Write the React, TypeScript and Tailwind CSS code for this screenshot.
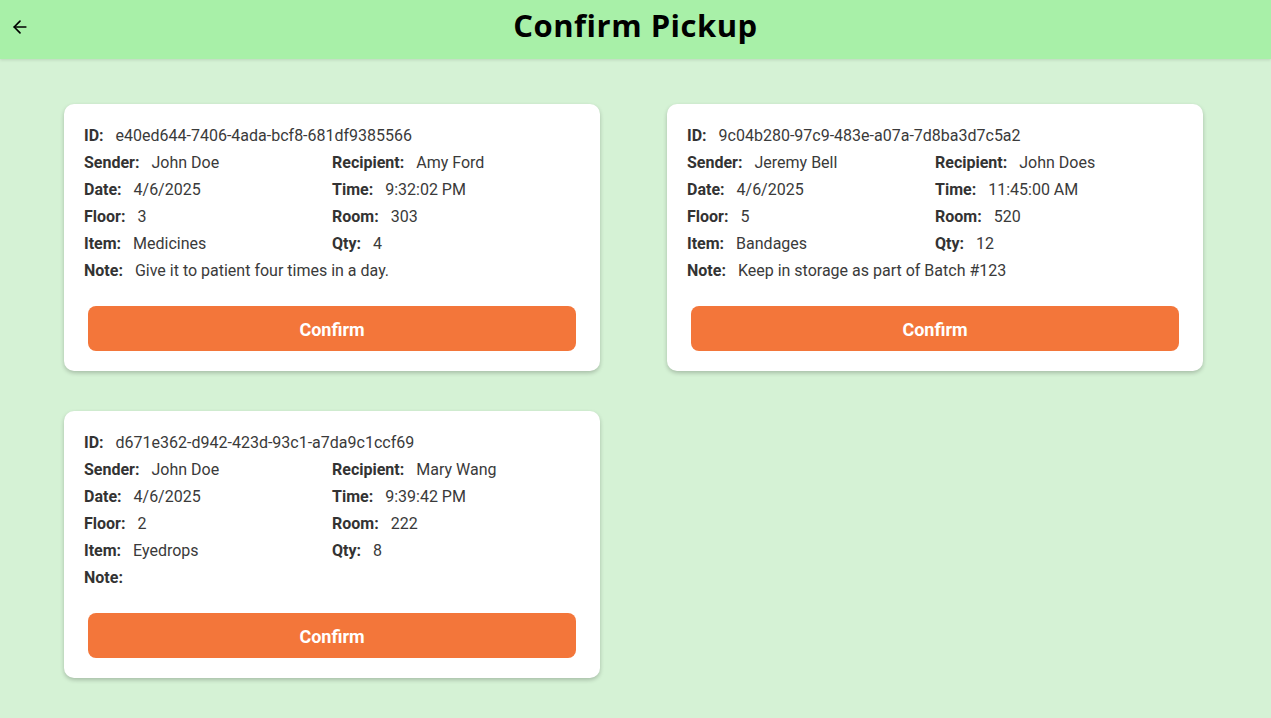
import React from 'react';
import { ArrowLeft } from 'lucide-react';

const pickups = [
  {
    id: 'e40ed644-7406-4ada-bcf8-681df9385566',
    sender: 'John Doe',
    recipient: 'Amy Ford',
    date: '4/6/2025',
    time: '9:32:02 PM',
    floor: '3',
    room: '303',
    item: 'Medicines',
    qty: '4',
    note: 'Give it to patient four times in a day.',
  },
  {
    id: '9c04b280-97c9-483e-a07a-7d8ba3d7c5a2',
    sender: 'Jeremy Bell',
    recipient: 'John Does',
    date: '4/6/2025',
    time: '11:45:00 AM',
    floor: '5',
    room: '520',
    item: 'Bandages',
    qty: '12',
    note: 'Keep in storage as part of Batch #123',
  },
  {
    id: 'd671e362-d942-423d-93c1-a7da9c1ccf69',
    sender: 'John Doe',
    recipient: 'Mary Wang',
    date: '4/6/2025',
    time: '9:39:42 PM',
    floor: '2',
    room: '222',
    item: 'Eyedrops',
    qty: '8',
    note: '',
  },
];

const Field = ({ label, value }: any) => (
  <div className="flex items-center h-[27px] whitespace-nowrap">
    <span className="font-bold text-[#333333]">{label}:</span>
    <span className="ml-[12px] text-[#3a3a3a]">{value}</span>
  </div>
);

const PickupCard = ({ p }: any) => (
  <div className="bg-white rounded-[10px] shadow-[0_2px_4px_rgba(0,0,0,0.22)] pt-[18px] pb-5 px-5">
    <Field label="ID" value={p.id} />
    <div className="grid grid-cols-2">
      <Field label="Sender" value={p.sender} />
      <Field label="Recipient" value={p.recipient} />
      <Field label="Date" value={p.date} />
      <Field label="Time" value={p.time} />
      <Field label="Floor" value={p.floor} />
      <Field label="Room" value={p.room} />
      <Field label="Item" value={p.item} />
      <Field label="Qty" value={p.qty} />
    </div>
    <Field label="Note" value={p.note} />
    <div className="px-1 mt-[22px]">
      <button className="w-full h-[45px] rounded-lg bg-[#f3763a] text-white font-bold text-[18px] pt-px">
        Confirm
      </button>
    </div>
  </div>
);

export default function App() {
  return (
    <div className="min-h-[718px] bg-[#d5f2d5] text-[16px]" style={{ fontFamily: 'Roboto, "Liberation Sans", sans-serif' }}>
      <header className="relative h-[59px] bg-[#a8f0a8] flex items-center justify-center shadow-[0_1px_3px_rgba(0,0,0,0.12)]">
        <button className="absolute left-[10px] top-[17px] text-black">
          <ArrowLeft className="w-5 h-5" strokeWidth={2} />
        </button>
        <h1 className="text-[31px] font-bold text-black tracking-[0.5px] -mt-[8px]" style={{ fontFamily: '"Open Sans", Lato, sans-serif' }}>
          Confirm Pickup
        </h1>
      </header>
      <main className="grid grid-cols-[536px_536px] gap-x-[67px] gap-y-10 pl-16 pt-[45px] pb-10">
        {pickups.map((p) => (
          <PickupCard key={p.id} p={p} />
        ))}
      </main>
    </div>
  );
}
